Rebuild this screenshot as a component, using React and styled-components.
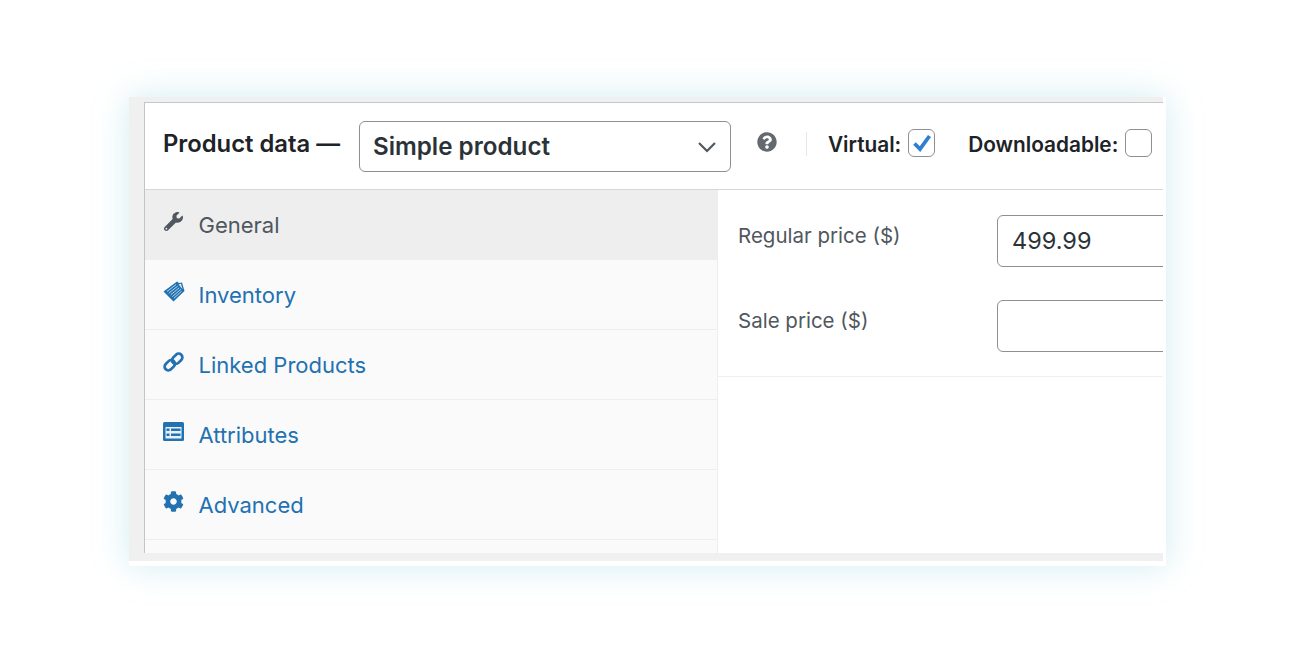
import React from "react";
import styled, { createGlobalStyle } from "styled-components";
import { FaWrench, FaCog, FaQuestionCircle } from "react-icons/fa";

const GlobalStyle = createGlobalStyle`
  html, body {
    margin: 0;
    padding: 0;
    background: #ffffff;
    font-family: Inter, "Liberation Sans", sans-serif;
  }
`;

const Page = styled.div`
  width: 1300px;
  height: 660px;
  box-sizing: border-box;
  padding: 97px 134px 94px 129px;
  overflow: hidden;
`;

const Frame = styled.div`
  height: 469px;
  box-sizing: border-box;
  background: #ffffff;
  padding: 0 3px 5px 0;
  box-shadow: 0 0 32px rgba(190, 228, 240, 0.7);
`;

const Backdrop = styled.div`
  height: 100%;
  box-sizing: border-box;
  background: #f0f0f1;
  padding: 5px 0 8px 15px;
  display: flex;
`;

const Panel = styled.div`
  flex: 1;
  min-width: 0;
  background: #ffffff;
  border-top: 1px solid #c6c7ca;
  border-left: 1px solid #c3c4c7;
  display: flex;
  flex-direction: column;
  overflow: hidden;
`;

const Header = styled.header`
  height: 87px;
  flex: none;
  box-sizing: border-box;
  border-bottom: 1px solid #d6d7d9;
  display: flex;
  align-items: flex-start;
  padding-left: 18px;
  color: #1d2327;
  white-space: nowrap;
`;

const Title = styled.h2`
  margin: 26px 19px 0 0;
  font-size: 23.8px;
  line-height: 30px;
  font-weight: 600;
  color: #1d2327;
`;

const SelectBox = styled.div`
  width: 372px;
  height: 51px;
  margin-top: 18px;
  box-sizing: border-box;
  border: 1px solid #8c8f94;
  border-radius: 6px;
  display: flex;
  align-items: center;
  justify-content: space-between;
  padding: 0 13px;
  font-size: 24.2px;
  font-weight: 600;
  color: #2c3338;
`;

const HelpIcon = styled(FaQuestionCircle)`
  width: 20px;
  height: 20px;
  margin: 29px 0 0 26px;
  color: #646970;
`;

const Divider = styled.span`
  width: 1px;
  height: 24px;
  margin: 29px 21px 0 29px;
  background: #e6e7e8;
`;

const CheckLabel = styled.label`
  display: flex;
  align-items: center;
  margin-top: 26px;
  margin-right: ${(props) => props.$gap}px;
  height: 28px;
  gap: 7px;
  font-size: 20.8px;
  font-weight: 600;
  color: #1d2327;
`;

const CheckText = styled.span`
  padding-top: 2px;
`;

const CheckBox = styled.span`
  width: 27px;
  height: 28px;
  box-sizing: border-box;
  flex: none;
  border: 1px solid #8c8f94;
  border-radius: 6px;
  background: #ffffff;
  display: flex;
  align-items: center;
  justify-content: center;
`;

const Body = styled.div`
  flex: 1;
  min-height: 0;
  display: flex;
`;

const TabList = styled.nav`
  width: 573px;
  flex: none;
  box-sizing: border-box;
  background: #fafafa;
  border-right: 1px solid #eeeeee;
`;

const Tab = styled.a`
  height: 70px;
  box-sizing: border-box;
  display: flex;
  align-items: flex-start;
  padding: 21px 0 0 18px;
  border-bottom: 1px solid #eeeeee;
  background: ${(props) => (props.$active ? "#eeeeee" : "#fafafa")};
  color: ${(props) => (props.$active ? "#50575e" : "#2271b1")};
  font-size: 22px;
  line-height: 28px;
`;

const TabIcon = styled.span`
  width: 21px;
  height: 21px;
  margin: 0 14.5px 0 0;
  flex: none;
  display: flex;
  align-items: center;
  justify-content: center;
  svg {
    display: block;
    flex: none;
  }
`;

const Fields = styled.section`
  flex: 1;
  min-width: 0;
`;

const FieldGroup = styled.div`
  height: 187px;
  box-sizing: border-box;
  padding-top: 25px;
  border-bottom: 1px solid #f0f0f1;
  display: flex;
  flex-direction: column;
  gap: 33px;
`;

const FieldRow = styled.div`
  display: flex;
  align-items: flex-start;
  padding-left: 20px;
`;

const FieldLabel = styled.label`
  width: 259px;
  flex: none;
  margin-top: 8px;
  font-size: 20.5px;
  line-height: 26px;
  color: #50575e;
`;

const PriceInput = styled.div`
  width: 400px;
  height: 52px;
  flex: none;
  box-sizing: border-box;
  border: 1px solid #8c8f94;
  border-radius: 6px;
  padding-left: 14px;
  font-size: 23.5px;
  line-height: 50px;
  color: #2c3338;
`;

const InventoryIcon = () => (
  <svg width="22" height="21" viewBox="0 0 22 21">
    <path d="M0.5 10.5 L14 0.5 L16 2 L19 1.5 L21.5 10 L10.5 20.5 Z" fill="#2271b1" />
    <path d="M15.5 3.2 L18 2.8 L19.6 8.2 Z" fill="#dce8f2" />
    <path
      d="M4 10.5 L13 3.6 M5.8 12.2 L14.6 5.2 M7.6 13.9 L16.2 6.8 M9.4 15.6 L17.8 8.4 M11 17.2 L18.6 10.2"
      stroke="#c9dcec"
      strokeWidth="0.9"
      fill="none"
    />
  </svg>
);

const LinkIcon = () => (
  <svg width="21" height="20" viewBox="0 0 21 20">
    <g fill="none" stroke="#2271b1" strokeWidth="2.7">
      <rect x="1" y="9.5" width="11.6" height="7.4" rx="3.7" transform="rotate(-45 6.8 13.2)" />
      <rect x="8.4" y="3.1" width="11.6" height="7.4" rx="3.7" transform="rotate(-45 14.2 6.8)" />
    </g>
  </svg>
);

const AttributesIcon = () => (
  <svg width="21" height="19" viewBox="0 0 21 19">
    <rect x="0" y="0" width="21" height="19" rx="1.5" fill="#2271b1" />
    <rect x="2.5" y="5" width="16" height="11.5" fill="#e9f1f8" />
    <rect x="3.5" y="6.5" width="3" height="2.5" fill="#2271b1" />
    <rect x="3.5" y="11.5" width="3" height="2.5" fill="#2271b1" />
    <rect x="8" y="6.5" width="9.5" height="2.5" fill="#2271b1" />
    <rect x="8" y="11.5" width="9.5" height="2.5" fill="#2271b1" />
  </svg>
);

const tabs = [
  { label: "General", icon: <FaWrench size={19} color="#50575e" />, active: true },
  { label: "Inventory", icon: <InventoryIcon /> },
  { label: "Linked Products", icon: <LinkIcon /> },
  { label: "Attributes", icon: <AttributesIcon /> },
  { label: "Advanced", icon: <FaCog size={21} color="#2271b1" /> },
];

const App = () => {
  return (
    <Page>
      <GlobalStyle />
      <Frame>
        <Backdrop>
          <Panel>
            <Header>
              <Title>Product data —</Title>
              <SelectBox>
                Simple product
                <svg width="20" height="12" viewBox="0 0 20 12">
                  <path d="M2 2 L10 10 L18 2" fill="none" stroke="#50575e" strokeWidth="2.2" />
                </svg>
              </SelectBox>
              <HelpIcon />
              <Divider />
              <CheckLabel $gap={33}>
                <CheckText>Virtual:</CheckText>
                <CheckBox>
                  <svg width="20" height="18" viewBox="0 0 20 18">
                    <path d="M2.5 9.5 L8 15 L17.5 2" fill="none" stroke="#2f7fd0" strokeWidth="3.8" />
                  </svg>
                </CheckBox>
              </CheckLabel>
              <CheckLabel $gap={0}>
                <CheckText>Downloadable:</CheckText>
                <CheckBox />
              </CheckLabel>
            </Header>
            <Body>
              <TabList>
                {tabs.map((tab) => (
                  <Tab key={tab.label} $active={tab.active}>
                    <TabIcon>{tab.icon}</TabIcon>
                    {tab.label}
                  </Tab>
                ))}
              </TabList>
              <Fields>
                <FieldGroup>
                  <FieldRow>
                    <FieldLabel>Regular price ($)</FieldLabel>
                    <PriceInput>499.99</PriceInput>
                  </FieldRow>
                  <FieldRow>
                    <FieldLabel>Sale price ($)</FieldLabel>
                    <PriceInput />
                  </FieldRow>
                </FieldGroup>
              </Fields>
            </Body>
          </Panel>
        </Backdrop>
      </Frame>
    </Page>
  );
};

export default App;
